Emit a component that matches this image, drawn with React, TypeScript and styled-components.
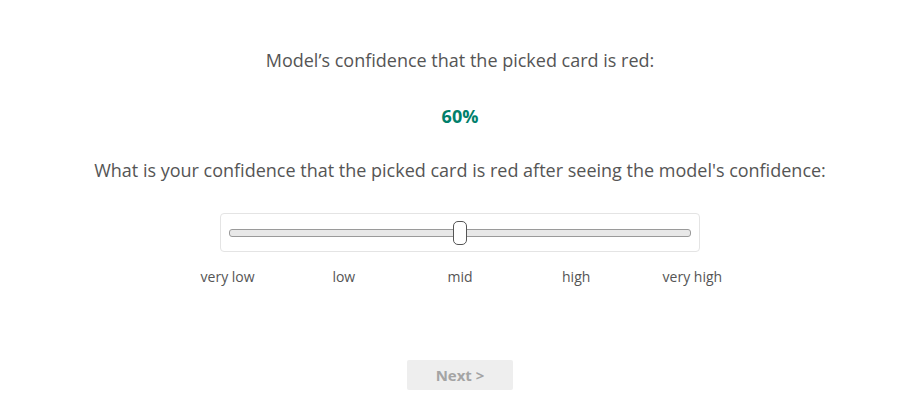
import React from "react";
import styled, { createGlobalStyle } from "styled-components";

const Global = createGlobalStyle`
  html, body { margin: 0; padding: 0; background: #fff; }
  body { font-family: "Open Sans", "Liberation Sans", sans-serif; color: #555; }
`;

const Page = styled.div`
  width: 900px;
  padding-left: 20px;
  box-sizing: border-box;
  display: flex;
  flex-direction: column;
  align-items: center;
  padding-top: 47px;
`;

const Prompt = styled.div`
  font-size: 18px;
  line-height: 26px;
  color: #555;
  text-align: center;
`;

const Value = styled.div`
  font-size: 18px;
  font-weight: 700;
  color: #00806b;
  line-height: 22px;
  margin-top: 32px;
`;

const Question = styled(Prompt)`
  margin-top: 30px;
`;

const SliderBox = styled.div`
  margin-top: 30px;
  width: 480px;
  height: 39px;
  box-sizing: border-box;
  border: 1px solid #e4e4e4;
  border-radius: 4px;
  display: flex;
  align-items: center;
  padding: 0 8px;
`;

const Track = styled.div`
  position: relative;
  flex: 1;
  height: 8px;
  box-sizing: border-box;
  background: #e8e8e8;
  border: 1px solid #9a9a9a;
  border-radius: 3px;
`;

const Thumb = styled.div`
  position: absolute;
  top: 50%;
  width: 14px;
  height: 24px;
  box-sizing: border-box;
  background: #fff;
  border: 1px solid #555;
  border-radius: 5px;
  transform: translate(-50%, -50%);
`;

const Labels = styled.div`
  margin-top: 15px;
  width: 581px;
  display: grid;
  grid-template-columns: repeat(5, 1fr);
`;

const Label = styled.div`
  font-size: 14px;
  line-height: 20px;
  text-align: center;
  color: #555;
`;

const NextButton = styled.button`
  margin-top: 73px;
  width: 106px;
  height: 30px;
  border: none;
  border-radius: 2px;
  background: #eeeeee;
  color: #a4a4a4;
  font-family: "Open Sans", "Liberation Sans", sans-serif;
  font-size: 15px;
  font-weight: 700;
  padding: 0;
`;

export default function App() {
  const pct = 50;
  const labels = ["very low", "low", "mid", "high", "very high"];
  return (
    <>
      <Global />
      <Page>
        <Prompt>Model’s confidence that the picked card is red:</Prompt>
        <Value>60%</Value>
        <Question>What is your confidence that the picked card is red after seeing the model's confidence:</Question>
        <SliderBox>
          <Track>
            <Thumb style={{ left: `${pct}%` }} />
          </Track>
        </SliderBox>
        <Labels>
          {labels.map((l) => (
            <Label key={l}>{l}</Label>
          ))}
        </Labels>
        <NextButton disabled>Next &gt;</NextButton>
      </Page>
    </>
  );
}
